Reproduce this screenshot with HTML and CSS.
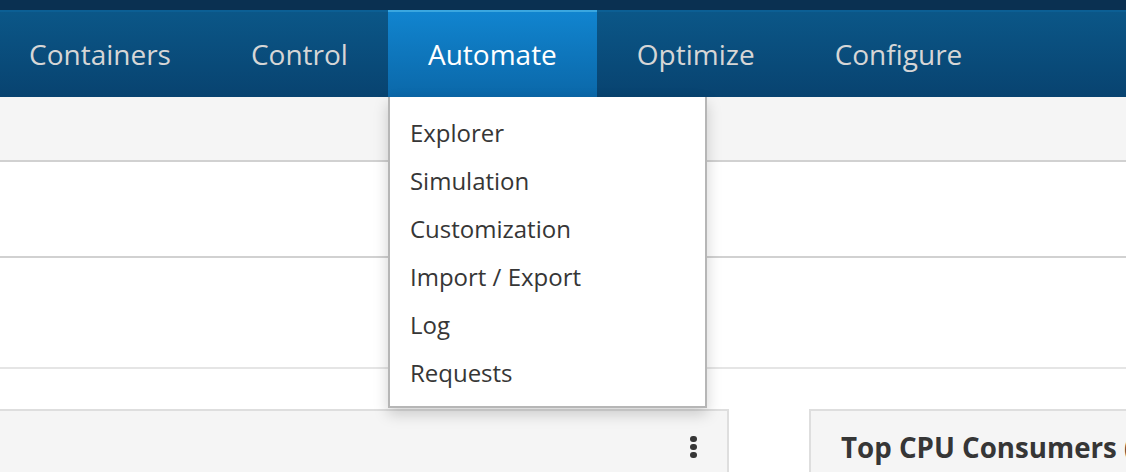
FILE: index.html
```html
<!DOCTYPE html>
<html>
<head>
<meta charset="utf-8">
<link rel="stylesheet" href="styles.css">
</head>
<body>
<div class="masthead"></div>
<nav class="navbar">
  <ul class="nav-list">
    <li class="nav-item">Containers</li>
    <li class="nav-item">Control</li>
    <li class="nav-item active">Automate
      <ul class="dropdown">
        <li class="dropdown-item">Explorer</li>
        <li class="dropdown-item">Simulation</li>
        <li class="dropdown-item">Customization</li>
        <li class="dropdown-item">Import / Export</li>
        <li class="dropdown-item">Log</li>
        <li class="dropdown-item">Requests</li>
      </ul>
    </li>
    <li class="nav-item">Optimize</li>
    <li class="nav-item">Configure</li>
  </ul>
</nav>
<div class="toolbar"></div>
<div class="band band-a"></div>
<div class="band band-b"></div>
<div class="cards">
  <div class="card card-left">
    <div class="card-head">
      <span class="kebab"><i></i><i></i><i></i></span>
    </div>
  </div>
  <div class="card card-right">
    <div class="card-head">
      <h2 class="card-title">Top CPU Consumers (last 24 hours)</h2>
    </div>
  </div>
</div>
</body>
</html>
```

FILE: styles.css
```css
html, body {
  margin: 0;
  padding: 0;
  background: #ffffff;
  overflow: hidden;
  width: 1126px;
  height: 472px;
  font-family: "Open Sans", "Noto Sans", sans-serif;
}

.masthead {
  height: 10px;
  background: #0a3051;
}

.navbar {
  height: 87px;
  background: linear-gradient(to bottom, #0b5788 0%, #084370 100%);
  box-shadow: inset 0 2px 0 #0c5f94;
}

.nav-list {
  display: flex;
  margin: 0 0 0 -11px;
  padding: 0;
  list-style: none;
  height: 100%;
}

.nav-item {
  position: relative;
  padding: 2px 40px 0;
  font-size: 28px;
  line-height: 85px;
  color: #d6d6d6;
  white-space: nowrap;
}

.nav-item.active {
  color: #ffffff;
  background: linear-gradient(to bottom, #1185d0 0%, #0b68a9 100%);
  box-shadow: inset 0 2px 0 #3aa7e0;
}

.dropdown {
  position: absolute;
  top: 87px;
  left: 0;
  z-index: 10;
  width: 315px;
  margin: 0;
  padding: 12px 0 9px;
  list-style: none;
  background: #ffffff;
  border: 2px solid #b6b6b6;
  border-top: none;
  box-shadow: 0 6px 14px rgba(0, 0, 0, 0.18);
}

.dropdown-item {
  padding: 0 20px;
  font-size: 24px;
  line-height: 48px;
  color: #363636;
}

.toolbar {
  height: 63px;
  background: #f5f5f5;
  border-bottom: 2px solid #d1d1d1;
}

.band-a {
  height: 94px;
  border-bottom: 2px solid #d1d1d1;
}

.band-b {
  height: 109px;
  border-bottom: 2px solid #e5e5e5;
}

.cards {
  display: flex;
  margin-top: 40px;
  margin-left: -2px;
}

.card {
  background: #f5f5f5;
  border: 2px solid #dedede;
  height: 120px;
  flex: none;
}

.card-left {
  width: 727px;
}

.card-right {
  width: 400px;
  margin-left: 80px;
}

.card-head {
  display: flex;
  align-items: center;
  justify-content: flex-end;
  height: 72px;
  padding: 0 30px;
}

.card-right .card-head {
  justify-content: flex-start;
}

.card-title {
  margin: 0;
  font-size: 27.7px;
  font-weight: 700;
  color: #363636;
  white-space: nowrap;
}

.kebab {
  display: flex;
  flex-direction: column;
  gap: 2px;
}

.kebab i {
  display: block;
  width: 7px;
  height: 6px;
  border-radius: 3px;
  background: #363636;
}
```
